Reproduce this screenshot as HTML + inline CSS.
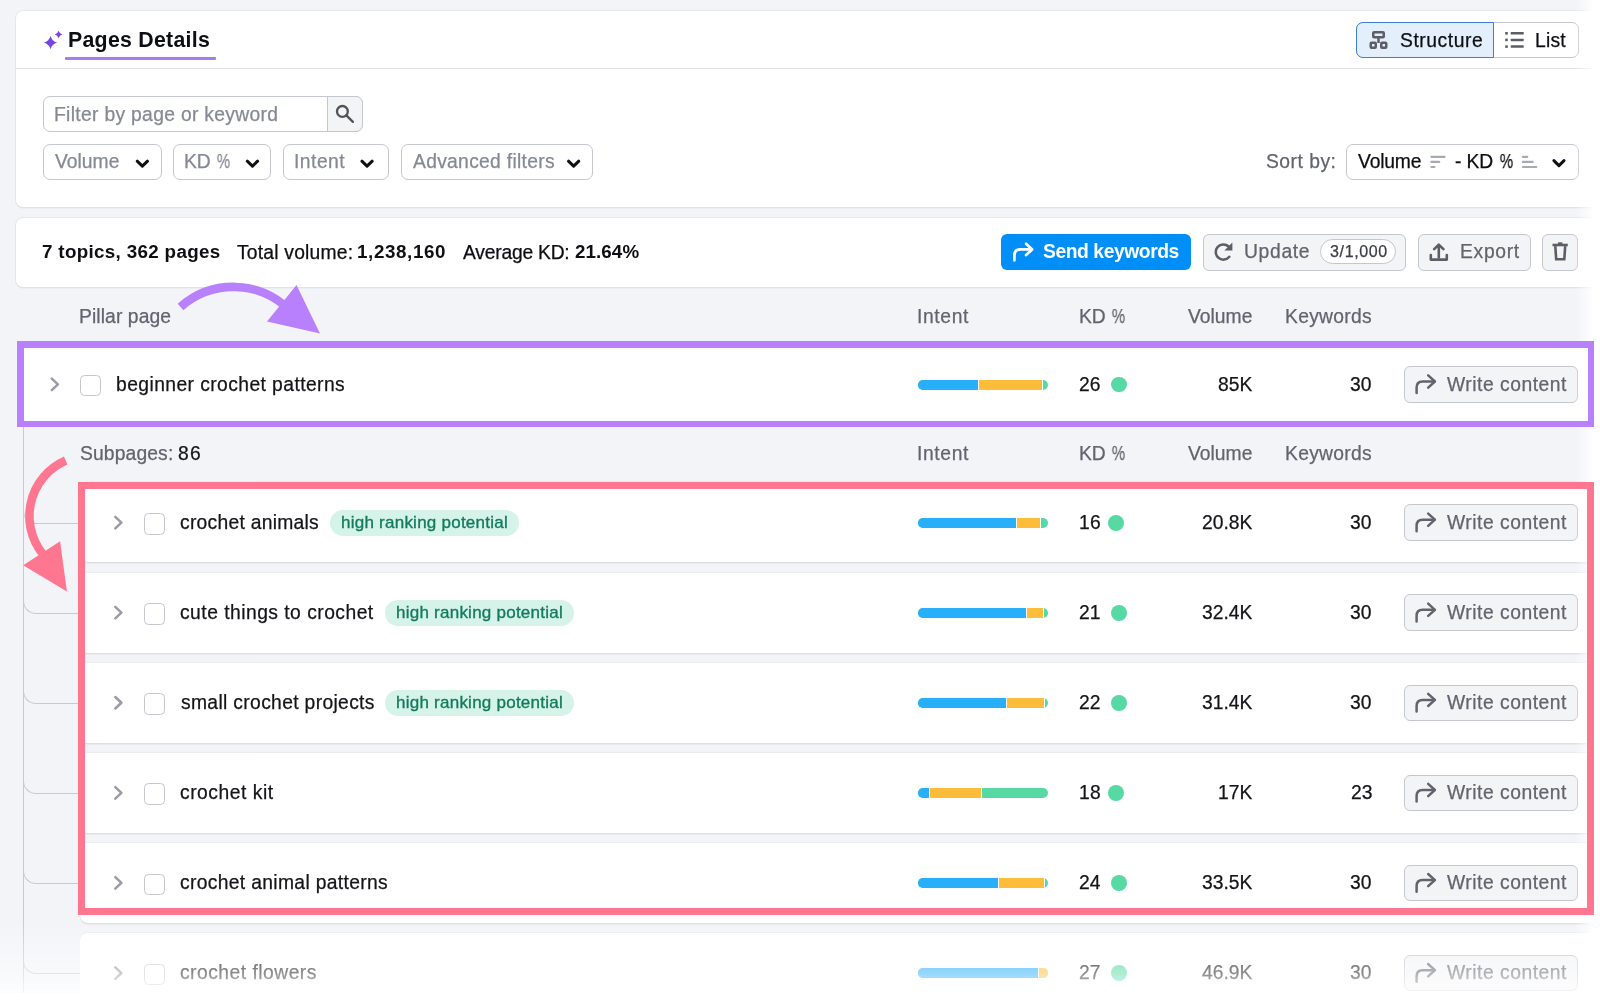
<!DOCTYPE html>
<html><head><meta charset="utf-8"><style>
html,body{margin:0;padding:0;}
body{width:1600px;height:1002px;overflow:hidden;position:relative;background:#f3f4f8;font-family:"Liberation Sans",sans-serif;}
.t{position:absolute;line-height:1;white-space:pre;-webkit-font-smoothing:antialiased;will-change:transform;}
.r{position:absolute;}
svg.r{overflow:visible;}
</style></head><body>
<div class="r" style="left:16.00px;top:11.00px;width:1624.00px;height:196.00px;background:#fff;border-radius:7px;box-shadow:0 0 0 0.8px #e3e4e8, 0 1px 1.5px rgba(0,0,0,0.12);"></div>
<div class="r" style="left:16.00px;top:68.00px;width:1624.00px;height:1.30px;background:#e1e2e7;"></div>
<svg class="r" style="left:40px;top:26px;" width="28" height="28" viewBox="40 26 28 28"><path d="M50.5 36.0 Q51.95 41.15 57.1 42.6 Q51.95 44.050000000000004 50.5 49.2 Q49.05 44.050000000000004 43.9 42.6 Q49.05 41.15 50.5 36.0Z" fill="#7845e2"/><path d="M58.6 30.7 Q59.45 33.65 62.4 34.5 Q59.45 35.35 58.6 38.3 Q57.75 35.35 54.800000000000004 34.5 Q57.75 33.65 58.6 30.7Z" fill="#7845e2"/></svg>
<div class="t" style="left:68.38px;top:29.97px;font-size:21.3px;color:#0e0f12;font-weight:700;letter-spacing:0.273px;">Pages Details</div>
<div class="r" style="left:65.00px;top:56.60px;width:150.80px;height:3.00px;background:#a77cf0;border-radius:1px;"></div>
<div class="r" style="left:1356.00px;top:21.70px;width:222.50px;height:36.30px;background:#fff;border:1.4px solid #c5c7ce;border-radius:7px;box-sizing:border-box;"></div>
<div class="r" style="left:1356.00px;top:21.70px;width:137.50px;height:36.30px;background:#e4effc;border:1.6px solid #3d7fd6;border-radius:7px 0 0 7px;box-sizing:border-box;"></div>
<svg class="r" style="left:1365px;top:27px;" width="27" height="26" viewBox="1365 27 27 26"><g fill="none" stroke="#5b5e67" stroke-width="2.5" stroke-linejoin="round"><rect x="1373.25" y="32.15" width="10.5" height="5.2" rx="0.8"/><rect x="1370.75" y="42.65" width="5" height="5.2" rx="0.8"/><rect x="1381.25" y="42.65" width="5" height="5.2" rx="0.8"/><path d="M1378.5 37.5 V43"/></g></svg>
<div class="t" style="left:1399.62px;top:30.96px;font-size:19.3px;color:#0e0f12;-webkit-text-stroke:0.25px currentColor;letter-spacing:0.554px;">Structure</div>
<svg class="r" style="left:1500px;top:28px;" width="30" height="24" viewBox="1500 28 30 24"><g fill="#5b5e67"><rect x="1505.2" y="32" width="2.6" height="2.6"/><rect x="1505.2" y="38.6" width="2.6" height="2.6"/><rect x="1505.2" y="45.3" width="2.6" height="2.6"/><rect x="1510.7" y="32" width="13" height="2.5" rx="0.6"/><rect x="1510.7" y="38.65" width="13" height="2.5" rx="0.6"/><rect x="1510.7" y="45.35" width="13" height="2.5" rx="0.6"/></g></svg>
<div class="t" style="left:1535.42px;top:30.96px;font-size:19.3px;color:#0e0f12;-webkit-text-stroke:0.25px currentColor;letter-spacing:0.230px;">List</div>
<div class="r" style="left:43.00px;top:96.00px;width:320.40px;height:36.00px;background:#fff;border:1.4px solid #c5c7ce;border-radius:7px;box-sizing:border-box;"></div>
<div class="r" style="left:327.00px;top:96.00px;width:36.40px;height:36.00px;background:#f3f4f6;border:1.4px solid #c5c7ce;border-radius:0 7px 7px 0;box-sizing:border-box;"></div>
<svg class="r" style="left:330px;top:100px;" width="30" height="28" viewBox="330 100 30 28"><g fill="none" stroke="#50525a" stroke-width="2.3" stroke-linecap="round"><circle cx="342.4" cy="111.4" r="5.4"/><path d="M346.4 115.4 L352.9 121.9"/></g></svg>
<div class="t" style="left:53.92px;top:104.66px;font-size:19.3px;color:#868993;-webkit-text-stroke:0.25px currentColor;letter-spacing:0.314px;">Filter by page or keyword</div>
<div class="r" style="left:43.20px;top:143.70px;width:118.80px;height:36.50px;background:#fff;border:1.4px solid #c5c7ce;border-radius:7px;box-sizing:border-box;"></div>
<div class="t" style="left:55.22px;top:151.66px;font-size:19.3px;color:#868993;-webkit-text-stroke:0.25px currentColor;letter-spacing:0.013px;">Volume</div>
<svg class="r" style="left:133px;top:157px;" width="19" height="14" viewBox="133 157 19 14"><path d="M137.20000000000002 161.2 L142.35000000000002 166.2 L147.5 161.2" fill="none" stroke="#111" stroke-width="3" stroke-linecap="round" stroke-linejoin="round"/></svg>
<div class="r" style="left:173.00px;top:143.70px;width:98.00px;height:36.50px;background:#fff;border:1.4px solid #c5c7ce;border-radius:7px;box-sizing:border-box;"></div>
<div class="t" style="left:183.82px;top:151.66px;font-size:19.3px;color:#868993;-webkit-text-stroke:0.25px currentColor;">KD</div>
<div class="t" style="left:212.93px;top:151.66px;font-size:19.3px;color:#868993;-webkit-text-stroke:0.25px currentColor;transform:scaleX(0.78);transform-origin:100% 50%;">%</div>
<svg class="r" style="left:243px;top:157px;" width="19" height="14" viewBox="243 157 19 14"><path d="M247.3 161.2 L252.45000000000002 166.2 L257.6 161.2" fill="none" stroke="#111" stroke-width="3" stroke-linecap="round" stroke-linejoin="round"/></svg>
<div class="r" style="left:283.00px;top:143.70px;width:106.00px;height:36.50px;background:#fff;border:1.4px solid #c5c7ce;border-radius:7px;box-sizing:border-box;"></div>
<div class="t" style="left:293.82px;top:151.66px;font-size:19.3px;color:#868993;-webkit-text-stroke:0.25px currentColor;letter-spacing:0.487px;">Intent</div>
<svg class="r" style="left:357px;top:157px;" width="20" height="14" viewBox="357 157 20 14"><path d="M361.90000000000003 161.2 L367.05000000000007 166.2 L372.20000000000005 161.2" fill="none" stroke="#111" stroke-width="3" stroke-linecap="round" stroke-linejoin="round"/></svg>
<div class="r" style="left:400.60px;top:143.70px;width:192.00px;height:36.50px;background:#fff;border:1.4px solid #c5c7ce;border-radius:7px;box-sizing:border-box;"></div>
<div class="t" style="left:412.96px;top:151.66px;font-size:19.3px;color:#868993;-webkit-text-stroke:0.25px currentColor;letter-spacing:0.294px;">Advanced filters</div>
<svg class="r" style="left:564px;top:157px;" width="19" height="14" viewBox="564 157 19 14"><path d="M568.5 161.2 L573.6500000000001 166.2 L578.8000000000001 161.2" fill="none" stroke="#111" stroke-width="3" stroke-linecap="round" stroke-linejoin="round"/></svg>
<div class="t" style="left:1265.72px;top:151.66px;font-size:19.3px;color:#62646d;-webkit-text-stroke:0.25px currentColor;letter-spacing:0.505px;">Sort by:</div>
<div class="r" style="left:1346.00px;top:143.70px;width:232.50px;height:36.50px;background:#fff;border:1.4px solid #c5c7ce;border-radius:7px;box-sizing:border-box;"></div>
<div class="t" style="left:1358.32px;top:151.66px;font-size:19.3px;color:#0e0f12;-webkit-text-stroke:0.25px currentColor;letter-spacing:-0.167px;">Volume</div>
<svg class="r" style="left:1426px;top:152px;" width="24" height="20" viewBox="1426 152 24 20"><g stroke="#a8aab2" stroke-width="2.2" stroke-linecap="round"><path d="M1431.4 156.8 H1444.6 M1431.4 161.9 H1439.2 M1431.4 167 H1434.4"/></g></svg>
<div class="t" style="left:1454.64px;top:151.66px;font-size:19.3px;color:#0e0f12;-webkit-text-stroke:0.25px currentColor;letter-spacing:-0.107px;">- KD</div>
<div class="t" style="left:1495.53px;top:151.66px;font-size:19.3px;color:#0e0f12;-webkit-text-stroke:0.25px currentColor;transform:scaleX(0.78);transform-origin:100% 50%;">%</div>
<svg class="r" style="left:1518px;top:152px;" width="24" height="20" viewBox="1518 152 24 20"><g stroke="#a8aab2" stroke-width="2.2" stroke-linecap="round"><path d="M1522.9 156.8 H1527.2 M1522.9 161.9 H1532.6 M1522.9 167 H1536.2"/></g></svg>
<svg class="r" style="left:1549px;top:156px;" width="20" height="14" viewBox="1549 156 20 14"><path d="M1553.9 160.6 L1558.95 165.6 L1564 160.6" fill="none" stroke="#111" stroke-width="3" stroke-linecap="round" stroke-linejoin="round"/></svg>
<div class="r" style="left:16.00px;top:217.50px;width:1624.00px;height:69.50px;background:#fff;border-radius:7px;box-shadow:0 0 0 0.8px #e3e4e8, 0 1px 1.5px rgba(0,0,0,0.12);"></div>
<div class="t" style="left:42.29px;top:243.08px;font-size:18.8px;color:#0e0f12;font-weight:700;letter-spacing:0.331px;">7 topics, 362 pages</div>
<div class="t" style="left:236.87px;top:242.66px;font-size:19.3px;color:#0e0f12;-webkit-text-stroke:0.25px currentColor;letter-spacing:0.207px;">Total volume:</div>
<div class="t" style="left:357.42px;top:243.08px;font-size:18.8px;color:#0e0f12;font-weight:700;letter-spacing:0.615px;">1,238,160</div>
<div class="t" style="left:462.96px;top:242.66px;font-size:19.3px;color:#0e0f12;-webkit-text-stroke:0.25px currentColor;letter-spacing:-0.228px;">Average KD:</div>
<div class="t" style="left:575.35px;top:243.08px;font-size:18.8px;color:#0e0f12;font-weight:700;letter-spacing:0.077px;">21.64%</div>
<div class="r" style="left:1001.20px;top:233.70px;width:190.00px;height:36.80px;background:#008ff8;border-radius:6px;"></div>
<svg class="r" style="left:1009px;top:238px;" width="28" height="27" viewBox="1009 238 28 27"><path d="M1014.4 260.3 V255.4 Q1014.4 249.4 1020.4 249.4 H1031.8" fill="none" stroke="#fff" stroke-width="2.7" stroke-linecap="round" stroke-linejoin="round"/><path d="M1026.04 243.8 L1032.2 249.4 L1026.04 255.0" fill="none" stroke="#fff" stroke-width="2.7" stroke-linecap="round" stroke-linejoin="round"/></svg>
<div class="t" style="left:1043.44px;top:241.66px;font-size:19.3px;color:#fff;font-weight:700;letter-spacing:-0.428px;">Send keywords</div>
<div class="r" style="left:1202.50px;top:234.00px;width:203.50px;height:36.50px;background:#f3f4f6;border:1.4px solid #c5c7ce;border-radius:6px;box-sizing:border-box;"></div>
<svg class="r" style="left:1210px;top:238px;" width="28" height="26" viewBox="1210 238 28 26"><path d="M1229.3 256.8 A7.6 7.6 0 1 1 1228.6 246.5" fill="none" stroke="#5b5e67" stroke-width="2.5" stroke-linecap="round"/><path d="M1232.4 242.6 L1232.4 250.6 L1224.4 250.6 Z" fill="#5b5e67"/></svg>
<div class="t" style="left:1244.01px;top:241.66px;font-size:19.3px;color:#62646d;-webkit-text-stroke:0.25px currentColor;letter-spacing:0.682px;">Update</div>
<div class="r" style="left:1320.40px;top:239.40px;width:75.40px;height:25.00px;background:#fff;border:1.3px solid #c5c7ce;border-radius:13px;box-sizing:border-box;"></div>
<div class="t" style="left:1329.89px;top:243.55px;font-size:16px;color:#3b3d44;-webkit-text-stroke:0.25px currentColor;letter-spacing:0.642px;">3/1,000</div>
<div class="r" style="left:1418.25px;top:234.00px;width:112.25px;height:36.50px;background:#f3f4f6;border:1.4px solid #c5c7ce;border-radius:6px;box-sizing:border-box;"></div>
<svg class="r" style="left:1424px;top:238px;" width="28" height="26" viewBox="1424 238 28 26"><g fill="none" stroke="#5b5e67" stroke-width="2.6" stroke-linecap="round" stroke-linejoin="round"><path d="M1438.8 257.5 V244.8 M1434.2 249.2 L1438.8 244.6 L1443.4 249.2"/><path d="M1430.8 255 V259.6 H1446.8 V255"/></g></svg>
<div class="t" style="left:1460.42px;top:241.66px;font-size:19.3px;color:#62646d;-webkit-text-stroke:0.25px currentColor;letter-spacing:0.689px;">Export</div>
<div class="r" style="left:1542.20px;top:234.00px;width:36.30px;height:36.50px;background:#f3f4f6;border:1.4px solid #c5c7ce;border-radius:6px;box-sizing:border-box;"></div>
<svg class="r" style="left:1548px;top:238px;" width="24" height="26" viewBox="1548 238 24 26"><g fill="none" stroke="#5b5e67" stroke-width="2.6" stroke-linejoin="miter"><path d="M1552.5 245 H1567.8"/><path d="M1558 243.6 H1562.4"/><path d="M1555.3 246.2 L1556.2 259.3 H1564.3 L1565.2 246.2"/></g></svg>
<div class="t" style="left:79.42px;top:306.66px;font-size:19.3px;color:#62646d;-webkit-text-stroke:0.25px currentColor;letter-spacing:0.094px;">Pillar page</div>
<div class="t" style="left:916.92px;top:306.66px;font-size:19.3px;color:#62646d;-webkit-text-stroke:0.25px currentColor;letter-spacing:0.627px;">Intent</div>
<div class="t" style="left:1079.12px;top:306.66px;font-size:19.3px;color:#62646d;-webkit-text-stroke:0.25px currentColor;">KD</div>
<div class="t" style="left:1108.03px;top:306.66px;font-size:19.3px;color:#62646d;-webkit-text-stroke:0.25px currentColor;transform:scaleX(0.78);transform-origin:100% 50%;">%</div>
<div class="t" style="left:1188.32px;top:306.66px;font-size:19.3px;color:#62646d;-webkit-text-stroke:0.25px currentColor;letter-spacing:0.013px;">Volume</div>
<div class="t" style="left:1285.12px;top:306.66px;font-size:19.3px;color:#62646d;-webkit-text-stroke:0.25px currentColor;letter-spacing:0.291px;">Keywords</div>
<div class="r" style="left:23px;top:427px;width:1.3px;height:566px;background:#c8cad0;"></div>
<div class="r" style="left:23px;top:482.70px;width:58px;height:41px;border-left:1.3px solid #c8cad0;border-bottom:1.3px solid #c8cad0;border-bottom-left-radius:13px;box-sizing:border-box;"></div>
<div class="r" style="left:23px;top:572.80px;width:58px;height:41px;border-left:1.3px solid #c8cad0;border-bottom:1.3px solid #c8cad0;border-bottom-left-radius:13px;box-sizing:border-box;"></div>
<div class="r" style="left:23px;top:662.90px;width:58px;height:41px;border-left:1.3px solid #c8cad0;border-bottom:1.3px solid #c8cad0;border-bottom-left-radius:13px;box-sizing:border-box;"></div>
<div class="r" style="left:23px;top:753.00px;width:58px;height:41px;border-left:1.3px solid #c8cad0;border-bottom:1.3px solid #c8cad0;border-bottom-left-radius:13px;box-sizing:border-box;"></div>
<div class="r" style="left:23px;top:843.10px;width:58px;height:41px;border-left:1.3px solid #c8cad0;border-bottom:1.3px solid #c8cad0;border-bottom-left-radius:13px;box-sizing:border-box;"></div>
<div class="r" style="left:23px;top:933.20px;width:58px;height:41px;border-left:1.3px solid #c8cad0;border-bottom:1.3px solid #c8cad0;border-bottom-left-radius:13px;box-sizing:border-box;"></div>
<div class="r" style="left:17.00px;top:341.00px;width:1623.00px;height:86.00px;background:#fff;"></div>
<svg class="r" style="left:47px;top:374px;" width="15" height="21" viewBox="47 374 15 21"><path d="M51.8 378.6 L57.9 384.35 L51.8 390.1" fill="none" stroke="#9a9ba6" stroke-width="2.5" stroke-linecap="round" stroke-linejoin="round"/></svg>
<div class="r" style="left:80.30px;top:374.90px;width:21.20px;height:21.60px;border:1.4px solid #c6c7cd;border-radius:4.5px;background:#fff;box-sizing:border-box;"></div>
<div class="t" style="left:116.26px;top:374.56px;font-size:19.3px;color:#141518;-webkit-text-stroke:0.25px currentColor;letter-spacing:0.419px;">beginner crochet patterns</div>
<div class="r" style="left:918px;top:380px;width:130px;height:10px;border-radius:5px;overflow:hidden;background:#57d9a3;"><div class="r" style="left:0;top:0;height:10px;width:60px;background:#29aefa;"></div><div class="r" style="left:60px;top:0;height:10px;width:1px;background:#fff;"></div><div class="r" style="left:61px;top:0;height:10px;width:63px;background:#fdbd3a;"></div><div class="r" style="left:124px;top:0;height:10px;width:1px;background:#fff;"></div></div>
<div class="t" style="left:1079.33px;top:374.56px;font-size:19.3px;color:#141518;-webkit-text-stroke:0.25px currentColor;">26</div>
<div class="r" style="left:1110.70px;top:376.50px;width:15.90px;height:15.90px;background:#57d9a3;border-radius:50%;"></div>
<div class="t" style="left:1217.87px;top:374.56px;font-size:19.3px;color:#141518;-webkit-text-stroke:0.25px currentColor;">85K</div>
<div class="t" style="left:1350.49px;top:374.56px;font-size:19.3px;color:#141518;-webkit-text-stroke:0.25px currentColor;">30</div>
<div class="r" style="left:1404.20px;top:366.10px;width:174.20px;height:36.50px;background:#f3f4f6;border:1.4px solid #c5c7ce;border-radius:6px;box-sizing:border-box;"></div>
<svg class="r" style="left:1411px;top:370px;" width="28" height="28" viewBox="1411 370 28 28"><path d="M1416.6 393.1 V387.5 Q1416.6 381.5 1422.6 381.5 H1434.5" fill="none" stroke="#62646d" stroke-width="2.5" stroke-linecap="round" stroke-linejoin="round"/><path d="M1428.19 375.4 L1434.9 381.5 L1428.19 387.6" fill="none" stroke="#62646d" stroke-width="2.5" stroke-linecap="round" stroke-linejoin="round"/></svg>
<div class="t" style="left:1446.92px;top:374.56px;font-size:19.3px;color:#62646d;-webkit-text-stroke:0.25px currentColor;letter-spacing:0.506px;">Write content</div>
<div class="t" style="left:79.92px;top:443.66px;font-size:19.3px;color:#62646d;-webkit-text-stroke:0.25px currentColor;letter-spacing:0.131px;">Subpages:</div>
<div class="t" style="left:178.16px;top:443.66px;font-size:19.3px;color:#141518;-webkit-text-stroke:0.25px currentColor;letter-spacing:1.219px;">86</div>
<div class="t" style="left:916.92px;top:443.66px;font-size:19.3px;color:#62646d;-webkit-text-stroke:0.25px currentColor;letter-spacing:0.627px;">Intent</div>
<div class="t" style="left:1079.12px;top:443.66px;font-size:19.3px;color:#62646d;-webkit-text-stroke:0.25px currentColor;">KD</div>
<div class="t" style="left:1108.03px;top:443.66px;font-size:19.3px;color:#62646d;-webkit-text-stroke:0.25px currentColor;transform:scaleX(0.78);transform-origin:100% 50%;">%</div>
<div class="t" style="left:1188.32px;top:443.66px;font-size:19.3px;color:#62646d;-webkit-text-stroke:0.25px currentColor;letter-spacing:0.013px;">Volume</div>
<div class="t" style="left:1285.12px;top:443.66px;font-size:19.3px;color:#62646d;-webkit-text-stroke:0.25px currentColor;letter-spacing:0.291px;">Keywords</div>
<div class="r" style="left:80.00px;top:482.40px;width:1560.00px;height:80.00px;background:#fff;border-radius:8px;box-shadow:0 1.5px 0 #dfe0e5, 0 -0.8px 0 #e9eaee;"></div>
<svg class="r" style="left:111px;top:512px;" width="15" height="21" viewBox="111 512 15 21"><path d="M115.3 516.8000000000001 L121.39999999999999 522.5500000000001 L115.3 528.3000000000001" fill="none" stroke="#9a9ba6" stroke-width="2.5" stroke-linecap="round" stroke-linejoin="round"/></svg>
<div class="r" style="left:143.50px;top:513.10px;width:21.20px;height:21.60px;border:1.4px solid #c6c7cd;border-radius:4.5px;background:#fff;box-sizing:border-box;"></div>
<div class="t" style="left:180.38px;top:512.76px;font-size:19.3px;color:#141518;-webkit-text-stroke:0.25px currentColor;letter-spacing:0.261px;">crochet animals</div>
<div class="r" style="left:330.00px;top:509.50px;width:188.50px;height:26.50px;background:#d6f3ea;border-radius:14px;"></div>
<div class="t" style="left:341.12px;top:513.71px;font-size:17px;color:#127b5b;-webkit-text-stroke:0.35px currentColor;letter-spacing:0.243px;">high ranking potential</div>
<div class="r" style="left:918px;top:518px;width:130px;height:10px;border-radius:5px;overflow:hidden;background:#57d9a3;"><div class="r" style="left:0;top:0;height:10px;width:98px;background:#29aefa;"></div><div class="r" style="left:98px;top:0;height:10px;width:1px;background:#fff;"></div><div class="r" style="left:99px;top:0;height:10px;width:23px;background:#fdbd3a;"></div><div class="r" style="left:122px;top:0;height:10px;width:1px;background:#fff;"></div></div>
<div class="t" style="left:1078.83px;top:512.76px;font-size:19.3px;color:#141518;-webkit-text-stroke:0.25px currentColor;letter-spacing:0.350px;">16</div>
<div class="r" style="left:1107.80px;top:514.70px;width:15.90px;height:15.90px;background:#57d9a3;border-radius:50%;"></div>
<div class="t" style="left:1201.78px;top:512.76px;font-size:19.3px;color:#141518;-webkit-text-stroke:0.25px currentColor;">20.8K</div>
<div class="t" style="left:1350.49px;top:512.76px;font-size:19.3px;color:#141518;-webkit-text-stroke:0.25px currentColor;">30</div>
<div class="r" style="left:1404.20px;top:504.30px;width:174.20px;height:36.50px;background:#f3f4f6;border:1.4px solid #c5c7ce;border-radius:6px;box-sizing:border-box;"></div>
<svg class="r" style="left:1411px;top:508px;" width="28" height="28" viewBox="1411 508 28 28"><path d="M1416.6 531.3000000000001 V525.7 Q1416.6 519.7 1422.6 519.7 H1434.5" fill="none" stroke="#62646d" stroke-width="2.5" stroke-linecap="round" stroke-linejoin="round"/><path d="M1428.19 513.6 L1434.9 519.7 L1428.19 525.8000000000001" fill="none" stroke="#62646d" stroke-width="2.5" stroke-linecap="round" stroke-linejoin="round"/></svg>
<div class="t" style="left:1446.92px;top:512.76px;font-size:19.3px;color:#62646d;-webkit-text-stroke:0.25px currentColor;letter-spacing:0.506px;">Write content</div>
<div class="r" style="left:80.00px;top:572.50px;width:1560.00px;height:80.00px;background:#fff;border-radius:8px;box-shadow:0 1.5px 0 #dfe0e5, 0 -0.8px 0 #e9eaee;"></div>
<svg class="r" style="left:111px;top:602px;" width="15" height="21" viewBox="111 602 15 21"><path d="M115.3 606.9000000000001 L121.39999999999999 612.6500000000001 L115.3 618.4000000000001" fill="none" stroke="#9a9ba6" stroke-width="2.5" stroke-linecap="round" stroke-linejoin="round"/></svg>
<div class="r" style="left:143.50px;top:603.20px;width:21.20px;height:21.60px;border:1.4px solid #c6c7cd;border-radius:4.5px;background:#fff;box-sizing:border-box;"></div>
<div class="t" style="left:180.38px;top:602.86px;font-size:19.3px;color:#141518;-webkit-text-stroke:0.25px currentColor;letter-spacing:0.472px;">cute things to crochet</div>
<div class="r" style="left:385.10px;top:599.60px;width:188.50px;height:26.50px;background:#d6f3ea;border-radius:14px;"></div>
<div class="t" style="left:396.22px;top:603.81px;font-size:17px;color:#127b5b;-webkit-text-stroke:0.35px currentColor;letter-spacing:0.243px;">high ranking potential</div>
<div class="r" style="left:918px;top:608px;width:130px;height:10px;border-radius:5px;overflow:hidden;background:#57d9a3;"><div class="r" style="left:0;top:0;height:10px;width:108px;background:#29aefa;"></div><div class="r" style="left:108px;top:0;height:10px;width:1px;background:#fff;"></div><div class="r" style="left:109px;top:0;height:10px;width:16px;background:#fdbd3a;"></div><div class="r" style="left:125px;top:0;height:10px;width:1px;background:#fff;"></div></div>
<div class="t" style="left:1079.33px;top:602.86px;font-size:19.3px;color:#141518;-webkit-text-stroke:0.25px currentColor;">21</div>
<div class="r" style="left:1110.70px;top:604.80px;width:15.90px;height:15.90px;background:#57d9a3;border-radius:50%;"></div>
<div class="t" style="left:1201.78px;top:602.86px;font-size:19.3px;color:#141518;-webkit-text-stroke:0.25px currentColor;">32.4K</div>
<div class="t" style="left:1350.49px;top:602.86px;font-size:19.3px;color:#141518;-webkit-text-stroke:0.25px currentColor;">30</div>
<div class="r" style="left:1404.20px;top:594.40px;width:174.20px;height:36.50px;background:#f3f4f6;border:1.4px solid #c5c7ce;border-radius:6px;box-sizing:border-box;"></div>
<svg class="r" style="left:1411px;top:598px;" width="28" height="28" viewBox="1411 598 28 28"><path d="M1416.6 621.4000000000001 V615.8000000000001 Q1416.6 609.8000000000001 1422.6 609.8000000000001 H1434.5" fill="none" stroke="#62646d" stroke-width="2.5" stroke-linecap="round" stroke-linejoin="round"/><path d="M1428.19 603.7 L1434.9 609.8000000000001 L1428.19 615.9000000000001" fill="none" stroke="#62646d" stroke-width="2.5" stroke-linecap="round" stroke-linejoin="round"/></svg>
<div class="t" style="left:1446.92px;top:602.86px;font-size:19.3px;color:#62646d;-webkit-text-stroke:0.25px currentColor;letter-spacing:0.506px;">Write content</div>
<div class="r" style="left:80.00px;top:662.60px;width:1560.00px;height:80.00px;background:#fff;border-radius:8px;box-shadow:0 1.5px 0 #dfe0e5, 0 -0.8px 0 #e9eaee;"></div>
<svg class="r" style="left:111px;top:693px;" width="15" height="20" viewBox="111 693 15 20"><path d="M115.3 697.0000000000001 L121.39999999999999 702.7500000000001 L115.3 708.5000000000001" fill="none" stroke="#9a9ba6" stroke-width="2.5" stroke-linecap="round" stroke-linejoin="round"/></svg>
<div class="r" style="left:143.50px;top:693.30px;width:21.20px;height:21.60px;border:1.4px solid #c6c7cd;border-radius:4.5px;background:#fff;box-sizing:border-box;"></div>
<div class="t" style="left:180.66px;top:692.96px;font-size:19.3px;color:#141518;-webkit-text-stroke:0.25px currentColor;letter-spacing:0.333px;">small crochet projects</div>
<div class="r" style="left:385.10px;top:689.70px;width:188.50px;height:26.50px;background:#d6f3ea;border-radius:14px;"></div>
<div class="t" style="left:396.22px;top:693.91px;font-size:17px;color:#127b5b;-webkit-text-stroke:0.35px currentColor;letter-spacing:0.243px;">high ranking potential</div>
<div class="r" style="left:918px;top:698px;width:130px;height:10px;border-radius:5px;overflow:hidden;background:#57d9a3;"><div class="r" style="left:0;top:0;height:10px;width:88px;background:#29aefa;"></div><div class="r" style="left:88px;top:0;height:10px;width:1px;background:#fff;"></div><div class="r" style="left:89px;top:0;height:10px;width:37px;background:#fdbd3a;"></div><div class="r" style="left:126px;top:0;height:10px;width:1px;background:#fff;"></div></div>
<div class="t" style="left:1079.33px;top:692.96px;font-size:19.3px;color:#141518;-webkit-text-stroke:0.25px currentColor;">22</div>
<div class="r" style="left:1110.70px;top:694.90px;width:15.90px;height:15.90px;background:#57d9a3;border-radius:50%;"></div>
<div class="t" style="left:1201.78px;top:692.96px;font-size:19.3px;color:#141518;-webkit-text-stroke:0.25px currentColor;">31.4K</div>
<div class="t" style="left:1350.49px;top:692.96px;font-size:19.3px;color:#141518;-webkit-text-stroke:0.25px currentColor;">30</div>
<div class="r" style="left:1404.20px;top:684.50px;width:174.20px;height:36.50px;background:#f3f4f6;border:1.4px solid #c5c7ce;border-radius:6px;box-sizing:border-box;"></div>
<svg class="r" style="left:1411px;top:688px;" width="28" height="28" viewBox="1411 688 28 28"><path d="M1416.6 711.5000000000001 V705.9000000000001 Q1416.6 699.9000000000001 1422.6 699.9000000000001 H1434.5" fill="none" stroke="#62646d" stroke-width="2.5" stroke-linecap="round" stroke-linejoin="round"/><path d="M1428.19 693.8000000000001 L1434.9 699.9000000000001 L1428.19 706.0000000000001" fill="none" stroke="#62646d" stroke-width="2.5" stroke-linecap="round" stroke-linejoin="round"/></svg>
<div class="t" style="left:1446.92px;top:692.96px;font-size:19.3px;color:#62646d;-webkit-text-stroke:0.25px currentColor;letter-spacing:0.506px;">Write content</div>
<div class="r" style="left:80.00px;top:752.70px;width:1560.00px;height:80.00px;background:#fff;border-radius:8px;box-shadow:0 1.5px 0 #dfe0e5, 0 -0.8px 0 #e9eaee;"></div>
<svg class="r" style="left:111px;top:783px;" width="15" height="20" viewBox="111 783 15 20"><path d="M115.3 787.1 L121.39999999999999 792.85 L115.3 798.6" fill="none" stroke="#9a9ba6" stroke-width="2.5" stroke-linecap="round" stroke-linejoin="round"/></svg>
<div class="r" style="left:143.50px;top:783.40px;width:21.20px;height:21.60px;border:1.4px solid #c6c7cd;border-radius:4.5px;background:#fff;box-sizing:border-box;"></div>
<div class="t" style="left:180.38px;top:783.06px;font-size:19.3px;color:#141518;-webkit-text-stroke:0.25px currentColor;letter-spacing:0.521px;">crochet kit</div>
<div class="r" style="left:918px;top:788px;width:130px;height:10px;border-radius:5px;overflow:hidden;background:#57d9a3;"><div class="r" style="left:0;top:0;height:10px;width:11px;background:#29aefa;"></div><div class="r" style="left:11px;top:0;height:10px;width:1px;background:#fff;"></div><div class="r" style="left:12px;top:0;height:10px;width:51px;background:#fdbd3a;"></div><div class="r" style="left:63px;top:0;height:10px;width:1px;background:#fff;"></div></div>
<div class="t" style="left:1078.83px;top:783.06px;font-size:19.3px;color:#141518;-webkit-text-stroke:0.25px currentColor;letter-spacing:0.341px;">18</div>
<div class="r" style="left:1107.80px;top:785.00px;width:15.90px;height:15.90px;background:#57d9a3;border-radius:50%;"></div>
<div class="t" style="left:1217.87px;top:783.06px;font-size:19.3px;color:#141518;-webkit-text-stroke:0.25px currentColor;">17K</div>
<div class="t" style="left:1350.58px;top:783.06px;font-size:19.3px;color:#141518;-webkit-text-stroke:0.25px currentColor;">23</div>
<div class="r" style="left:1404.20px;top:774.60px;width:174.20px;height:36.50px;background:#f3f4f6;border:1.4px solid #c5c7ce;border-radius:6px;box-sizing:border-box;"></div>
<svg class="r" style="left:1411px;top:778px;" width="28" height="28" viewBox="1411 778 28 28"><path d="M1416.6 801.6 V796.0 Q1416.6 790.0 1422.6 790.0 H1434.5" fill="none" stroke="#62646d" stroke-width="2.5" stroke-linecap="round" stroke-linejoin="round"/><path d="M1428.19 783.9 L1434.9 790.0 L1428.19 796.1" fill="none" stroke="#62646d" stroke-width="2.5" stroke-linecap="round" stroke-linejoin="round"/></svg>
<div class="t" style="left:1446.92px;top:783.06px;font-size:19.3px;color:#62646d;-webkit-text-stroke:0.25px currentColor;letter-spacing:0.506px;">Write content</div>
<div class="r" style="left:80.00px;top:842.80px;width:1560.00px;height:80.00px;background:#fff;border-radius:8px;box-shadow:0 1.5px 0 #dfe0e5, 0 -0.8px 0 #e9eaee;"></div>
<svg class="r" style="left:111px;top:873px;" width="15" height="20" viewBox="111 873 15 20"><path d="M115.3 877.2 L121.39999999999999 882.95 L115.3 888.7" fill="none" stroke="#9a9ba6" stroke-width="2.5" stroke-linecap="round" stroke-linejoin="round"/></svg>
<div class="r" style="left:143.50px;top:873.50px;width:21.20px;height:21.60px;border:1.4px solid #c6c7cd;border-radius:4.5px;background:#fff;box-sizing:border-box;"></div>
<div class="t" style="left:180.38px;top:873.16px;font-size:19.3px;color:#141518;-webkit-text-stroke:0.25px currentColor;letter-spacing:0.332px;">crochet animal patterns</div>
<div class="r" style="left:918px;top:878px;width:130px;height:10px;border-radius:5px;overflow:hidden;background:#57d9a3;"><div class="r" style="left:0;top:0;height:10px;width:80px;background:#29aefa;"></div><div class="r" style="left:80px;top:0;height:10px;width:1px;background:#fff;"></div><div class="r" style="left:81px;top:0;height:10px;width:45px;background:#fdbd3a;"></div><div class="r" style="left:126px;top:0;height:10px;width:1px;background:#fff;"></div></div>
<div class="t" style="left:1079.33px;top:873.16px;font-size:19.3px;color:#141518;-webkit-text-stroke:0.25px currentColor;">24</div>
<div class="r" style="left:1110.70px;top:875.10px;width:15.90px;height:15.90px;background:#57d9a3;border-radius:50%;"></div>
<div class="t" style="left:1201.78px;top:873.16px;font-size:19.3px;color:#141518;-webkit-text-stroke:0.25px currentColor;">33.5K</div>
<div class="t" style="left:1350.49px;top:873.16px;font-size:19.3px;color:#141518;-webkit-text-stroke:0.25px currentColor;">30</div>
<div class="r" style="left:1404.20px;top:864.70px;width:174.20px;height:36.50px;background:#f3f4f6;border:1.4px solid #c5c7ce;border-radius:6px;box-sizing:border-box;"></div>
<svg class="r" style="left:1411px;top:869px;" width="28" height="27" viewBox="1411 869 28 27"><path d="M1416.6 891.7 V886.1 Q1416.6 880.1 1422.6 880.1 H1434.5" fill="none" stroke="#62646d" stroke-width="2.5" stroke-linecap="round" stroke-linejoin="round"/><path d="M1428.19 874.0 L1434.9 880.1 L1428.19 886.2" fill="none" stroke="#62646d" stroke-width="2.5" stroke-linecap="round" stroke-linejoin="round"/></svg>
<div class="t" style="left:1446.92px;top:873.16px;font-size:19.3px;color:#62646d;-webkit-text-stroke:0.25px currentColor;letter-spacing:0.506px;">Write content</div>
<div class="r" style="left:80.00px;top:932.90px;width:1560.00px;height:80.00px;background:#fff;border-radius:8px;box-shadow:0 1.5px 0 #dfe0e5, 0 -0.8px 0 #e9eaee;"></div>
<svg class="r" style="left:111px;top:963px;" width="15" height="20" viewBox="111 963 15 20"><path d="M115.3 967.3000000000001 L121.39999999999999 973.0500000000001 L115.3 978.8000000000001" fill="none" stroke="#9a9ba6" stroke-width="2.5" stroke-linecap="round" stroke-linejoin="round"/></svg>
<div class="r" style="left:143.50px;top:963.60px;width:21.20px;height:21.60px;border:1.4px solid #c6c7cd;border-radius:4.5px;background:#fff;box-sizing:border-box;"></div>
<div class="t" style="left:180.38px;top:963.26px;font-size:19.3px;color:#141518;-webkit-text-stroke:0.25px currentColor;letter-spacing:0.481px;">crochet flowers</div>
<div class="r" style="left:918px;top:968px;width:130px;height:10px;border-radius:5px;overflow:hidden;background:#57d9a3;"><div class="r" style="left:0;top:0;height:10px;width:120px;background:#29aefa;"></div><div class="r" style="left:120px;top:0;height:10px;width:1px;background:#fff;"></div><div class="r" style="left:121px;top:0;height:10px;width:9px;background:#fdbd3a;"></div><div class="r" style="left:130px;top:0;height:10px;width:1px;background:#fff;"></div></div>
<div class="t" style="left:1079.33px;top:963.26px;font-size:19.3px;color:#141518;-webkit-text-stroke:0.25px currentColor;">27</div>
<div class="r" style="left:1110.70px;top:965.20px;width:15.90px;height:15.90px;background:#57d9a3;border-radius:50%;"></div>
<div class="t" style="left:1201.78px;top:963.26px;font-size:19.3px;color:#141518;-webkit-text-stroke:0.25px currentColor;">46.9K</div>
<div class="t" style="left:1350.49px;top:963.26px;font-size:19.3px;color:#141518;-webkit-text-stroke:0.25px currentColor;">30</div>
<div class="r" style="left:1404.20px;top:954.80px;width:174.20px;height:36.50px;background:#f3f4f6;border:1.4px solid #c5c7ce;border-radius:6px;box-sizing:border-box;"></div>
<svg class="r" style="left:1411px;top:959px;" width="28" height="27" viewBox="1411 959 28 27"><path d="M1416.6 981.8000000000001 V976.2 Q1416.6 970.2 1422.6 970.2 H1434.5" fill="none" stroke="#62646d" stroke-width="2.5" stroke-linecap="round" stroke-linejoin="round"/><path d="M1428.19 964.1 L1434.9 970.2 L1428.19 976.3000000000001" fill="none" stroke="#62646d" stroke-width="2.5" stroke-linecap="round" stroke-linejoin="round"/></svg>
<div class="t" style="left:1446.92px;top:963.26px;font-size:19.3px;color:#62646d;-webkit-text-stroke:0.25px currentColor;letter-spacing:0.506px;">Write content</div>
<div class="r" style="left:0.00px;top:918.00px;width:1600.00px;height:84.00px;background:linear-gradient(to bottom, rgba(255,255,255,0) 0%, rgba(255,255,255,0.5) 65%, rgba(255,255,255,0.92) 100%);"></div>
<div class="r" style="left:0.00px;top:993.00px;width:1600.00px;height:9.00px;background:#fff;"></div>
<div class="r" style="left:1574.00px;top:0.00px;width:26.00px;height:1002.00px;background:linear-gradient(to right, rgba(255,255,255,0) 0px, rgba(255,255,255,0.55) 12px, rgba(255,255,255,1) 20px);"></div>
<div class="r" style="left:17.00px;top:341.00px;width:1577.00px;height:85.60px;border:solid #b980fd;border-width:7px 6.8px 6.6px 7px;box-sizing:border-box;"></div>
<div class="r" style="left:77.80px;top:481.80px;width:1516.20px;height:433.20px;border:solid #ff7691;border-width:7.3px 7px 7px 7.2px;box-sizing:border-box;"></div>
<svg class="r" style="left:160px;top:260px;" width="180" height="85" viewBox="160 260 180 85"><path d="M180.5 307 A79.7 79.7 0 0 1 289 309.5" fill="none" stroke="#b980fd" stroke-width="8.6"/><path d="M296.5 285 L267 321.5 L320 333.5 Z" fill="#b980fd"/></svg>
<svg class="r" style="left:10px;top:445px;" width="70" height="155" viewBox="10 445 70 155"><path d="M65.7 460.5 A60.7 60.7 0 0 0 47.1 558.9" fill="none" stroke="#ff7691" stroke-width="8.6"/><path d="M23.2 565.3 L60.1 541.3 L66.9 591.5 Z" fill="#ff7691"/></svg>
</body></html>
